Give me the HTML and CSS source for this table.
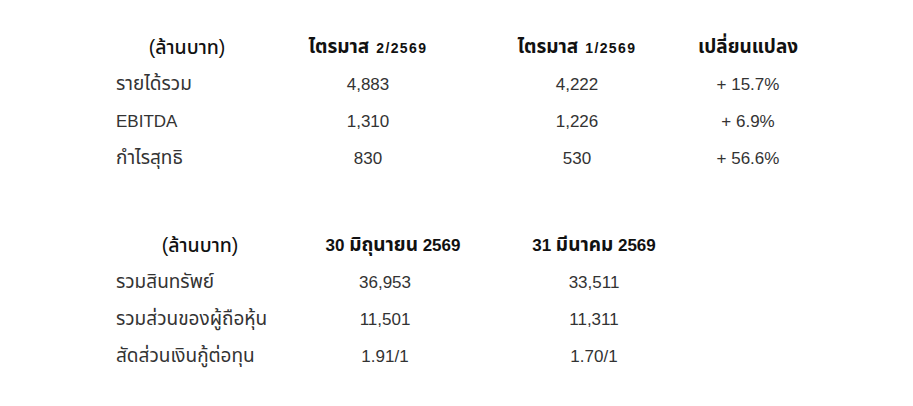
FILE: index.html
```html
<!DOCTYPE html>
<html lang="th">
<head>
<meta charset="utf-8">
<title>สรุปผลการดำเนินงาน</title>
<link rel="stylesheet" href="styles.css">
</head>
<body>
<main class="page">
  <section class="table t1">
    <div class="cell head unit th">(ล้านบาท)</div>
    <div class="cell head"><span class="th">ไตรมาส</span><span class="qnum">2/2569</span></div>
    <div class="cell head"><span class="th">ไตรมาส</span><span class="qnum">1/2569</span></div>
    <div class="cell head th">เปลี่ยนแปลง</div>

    <div class="cell label th">รายได้รวม</div>
    <div class="cell">4,883</div>
    <div class="cell">4,222</div>
    <div class="cell">+ 15.7%</div>

    <div class="cell label">EBITDA</div>
    <div class="cell">1,310</div>
    <div class="cell">1,226</div>
    <div class="cell">+ 6.9%</div>

    <div class="cell label th">กำไรสุทธิ</div>
    <div class="cell">830</div>
    <div class="cell">530</div>
    <div class="cell">+ 56.6%</div>
  </section>

  <section class="table t2">
    <div class="cell head unit th">(ล้านบาท)</div>
    <div class="cell head shift">30&nbsp;<span class="th">มิถุนายน</span>&nbsp;2569</div>
    <div class="cell head">31&nbsp;<span class="th">มีนาคม</span>&nbsp;2569</div>

    <div class="cell label th">รวมสินทรัพย์</div>
    <div class="cell">36,953</div>
    <div class="cell">33,511</div>

    <div class="cell label th">รวมส่วนของผู้ถือหุ้น</div>
    <div class="cell">11,501</div>
    <div class="cell">11,311</div>

    <div class="cell label th">สัดส่วนเงินกู้ต่อทุน</div>
    <div class="cell">1.91/1</div>
    <div class="cell">1.70/1</div>
  </section>
</main>
</body>
</html>
```
FILE: styles.css
```css
html, body {
  margin: 0;
  padding: 0;
  background: #ffffff;
}

body {
  font-family: "Liberation Sans", "Noto Sans Thai", "Noto Sans", Arial, sans-serif;
  color: #333333;
  font-size: 17px;
}

.page {
  padding: 29px 0 0 116px;
}

.table {
  display: grid;
  grid-auto-rows: 37px;
}

.t1 {
  grid-template-columns: 142px 220px 198px 144px;
}

.t2 {
  margin-top: 50px;
  grid-template-columns: 168px 202px 216px;
}

.cell {
  display: flex;
  align-items: center;
  justify-content: center;
  white-space: nowrap;
}

.cell.label {
  justify-content: flex-start;
}

.th {
  font-size: 19px;
}

.head {
  font-weight: bold;
  color: #111111;
}

.head.unit {
  font-weight: 500;
  font-size: 19.5px;
}

.qnum {
  font-size: 14px;
  letter-spacing: 1.4px;
  margin-left: 7px;
}

.head.shift {
  padding-left: 16px;
}
```
